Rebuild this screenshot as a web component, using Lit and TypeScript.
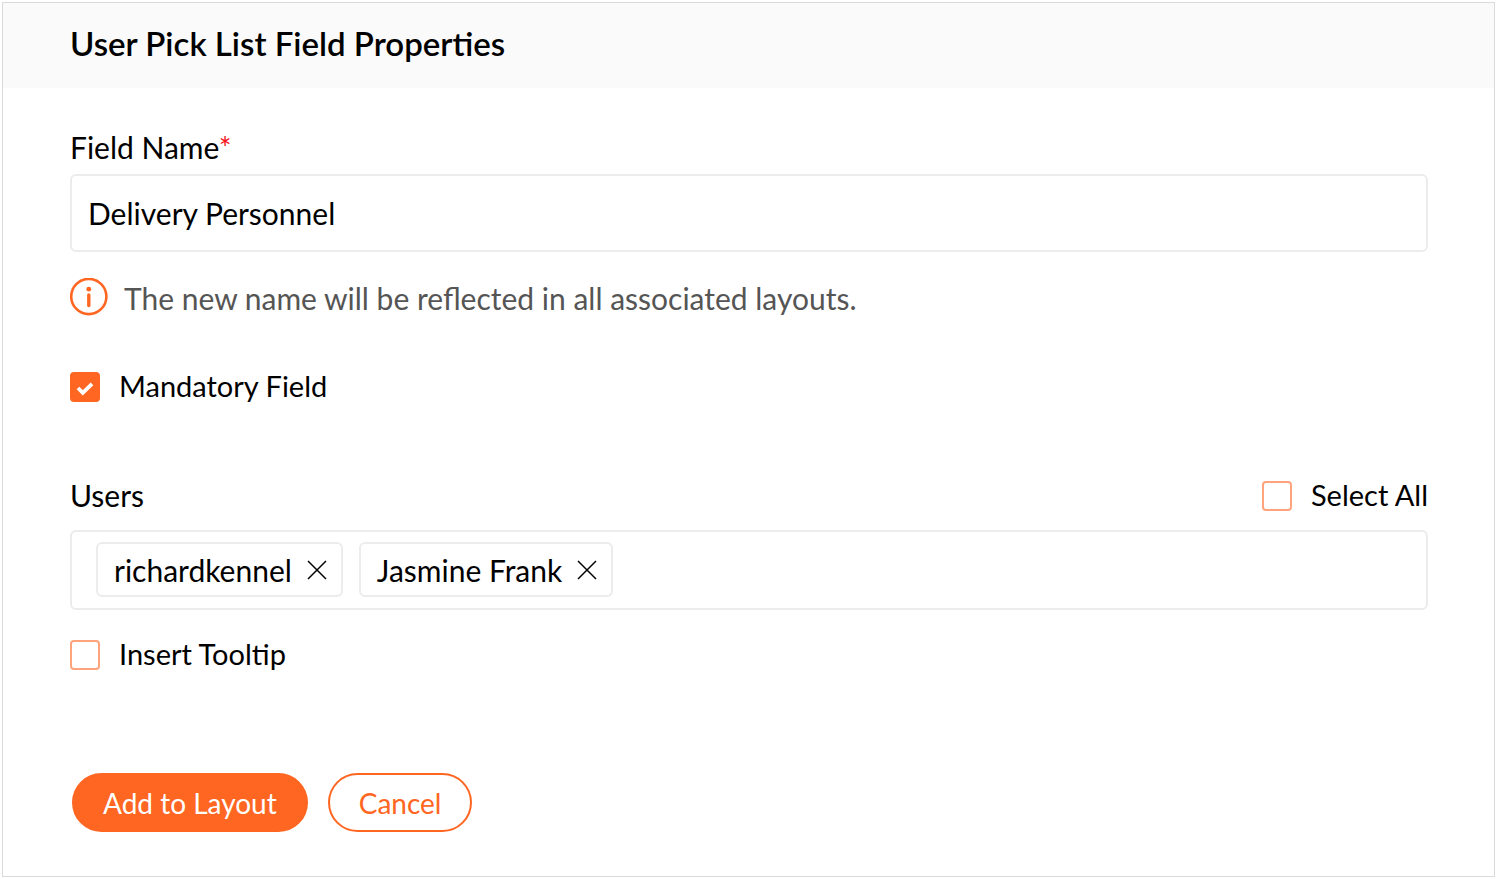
import { LitElement, html, css } from "lit";
import { customElement, property, state } from "lit/decorators.js";

@customElement("check-option")
class CheckOption extends LitElement {
  @property() label = "";
  @property({ type: Boolean }) checked = false;

  static styles = css`
    :host {
      display: block;
    }
    .option {
      display: flex;
      align-items: center;
      gap: 19px;
      font-size: 29px;
      line-height: 34px;
      cursor: pointer;
    }
    .text {
      padding-bottom: 2px;
    }
    .tick {
      display: grid;
      width: 30px;
      height: 30px;
    }
    .box,
    .mark {
      grid-area: 1 / 1;
      width: 30px;
      height: 30px;
      margin: 0;
    }
    .box {
      appearance: none;
      box-sizing: border-box;
      border: 2px solid #ffa37c;
      border-radius: 4px;
      background: #fff;
    }
    .box:checked {
      border-color: #ff6622;
      background: #ff6622;
    }
    .mark {
      pointer-events: none;
      fill: none;
      stroke: #fff;
      stroke-width: 3.8;
    }
  `;

  private toggle(e: Event) {
    this.checked = (e.target as HTMLInputElement).checked;
  }

  render() {
    return html`
      <label class="option">
        <span class="tick">
          <input class="box" type="checkbox" .checked=${this.checked} @change=${this.toggle} />
          ${this.checked
            ? html`<svg class="mark" viewBox="0 0 30 30" aria-hidden="true">
                <path d="M8 16 L12.8 20.8 L22 11.8" />
              </svg>`
            : ""}
        </span>
        <span class="text">${this.label}</span>
      </label>
    `;
  }
}

@customElement("app-root")
class AppRoot extends LitElement {
  @state() private users = ["richardkennel", "Jasmine Frank"];

  static styles = css`
    :host {
      display: block;
      box-sizing: border-box;
      min-height: 100vh;
      padding: 2px;
      background: #fff;
      color: #000;
      font-family: Lato, "Open Sans", sans-serif;
      font-size: 30px;
      line-height: 36px;
    }
    .panel {
      box-sizing: border-box;
      min-height: calc(100vh - 4px);
      border: 1px solid #dadada;
    }
    .head {
      padding: 20px 66px 25px 67px;
      background: #fafafa;
    }
    .title {
      margin: 0;
      font-size: 33px;
      line-height: 40px;
      font-weight: 600;
    }
    .form {
      padding: 41px 66px 44px 67px;
    }
    .label {
      display: block;
    }
    .required {
      color: #f5121d;
    }
    .field {
      box-sizing: border-box;
      display: block;
      width: 100%;
      height: 78px;
      margin-top: 9px;
      padding: 0 16px;
      border: 2px solid #ececec;
      border-radius: 6px;
      background: #fff;
      color: inherit;
      font: inherit;
      outline: none;
    }
    .note {
      display: flex;
      align-items: center;
      gap: 16px;
      margin: 26px 0 0;
      color: #555;
    }
    .note-text {
      padding-top: 2px;
    }
    .info {
      flex: none;
      width: 38px;
      height: 38px;
    }
    .mandatory {
      margin-top: 53px;
    }
    .row {
      display: flex;
      justify-content: space-between;
      margin-top: 73px;
      line-height: 34px;
    }
    .users {
      box-sizing: border-box;
      display: flex;
      flex-wrap: wrap;
      gap: 16px;
      min-height: 80px;
      margin: 16px 0 0;
      padding: 10px 24px;
      border: 2px solid #ececec;
      border-radius: 6px;
      list-style: none;
    }
    .chip {
      box-sizing: border-box;
      display: flex;
      align-items: center;
      gap: 15px;
      height: 55px;
      padding: 0 14px 0 16px;
      border: 2px solid #ececec;
      border-radius: 6px;
    }
    .remove {
      display: grid;
      padding: 0;
      border: 0;
      background: none;
      cursor: pointer;
    }
    .cross {
      width: 20px;
      height: 20px;
      fill: none;
      stroke: #000;
      stroke-width: 1.5;
    }
    .tooltip {
      margin-top: 27px;
    }
    .actions {
      display: flex;
      gap: 20px;
      margin-top: 100px;
      padding-left: 2px;
    }
    .button {
      height: 59px;
      padding: 0 29px;
      border: 2px solid #ff6622;
      border-radius: 30px;
      background: #fff;
      color: #ff6622;
      font: inherit;
      font-size: 28px;
      cursor: pointer;
    }
    .primary {
      background: #ff6622;
      color: #fff;
    }
  `;

  private remove(user: string) {
    this.users = this.users.filter((u) => u !== user);
  }

  render() {
    return html`
      <main class="panel">
        <header class="head">
          <h1 class="title">User Pick List Field Properties</h1>
        </header>
        <form class="form" @submit=${(e: Event) => e.preventDefault()}>
          <label class="label" for="name">Field Name<span class="required">*</span></label>
          <input class="field" id="name" type="text" value="Delivery Personnel" required />
          <p class="note">
            <svg class="info" viewBox="0 0 38 38" aria-hidden="true">
              <circle cx="18.8" cy="18.5" r="17.6" fill="none" stroke="#ff6622" stroke-width="2.6" />
              <circle cx="18.8" cy="11.2" r="2.4" fill="#ff6622" />
              <path d="M18.8 17 V27.6" stroke="#ff6622" stroke-width="3.4" stroke-linecap="round" />
            </svg>
            <span class="note-text">The new name will be reflected in all associated layouts.</span>
          </p>
          <check-option class="mandatory" label="Mandatory Field" checked></check-option>
          <div class="row">
            <span id="users">Users</span>
            <check-option label="Select All"></check-option>
          </div>
          <ul class="users" aria-labelledby="users">
            ${this.users.map(
              (user) => html`
                <li class="chip">
                  <span>${user}</span>
                  <button class="remove" type="button" aria-label="Remove ${user}" @click=${() => this.remove(user)}>
                    <svg class="cross" viewBox="0 0 20 20" aria-hidden="true">
                      <path d="M1 1 L19 19 M19 1 L1 19" />
                    </svg>
                  </button>
                </li>
              `
            )}
          </ul>
          <check-option class="tooltip" label="Insert Tooltip"></check-option>
          <div class="actions">
            <button class="button primary" type="submit">Add to Layout</button>
            <button class="button" type="button">Cancel</button>
          </div>
        </form>
      </main>
    `;
  }
}
